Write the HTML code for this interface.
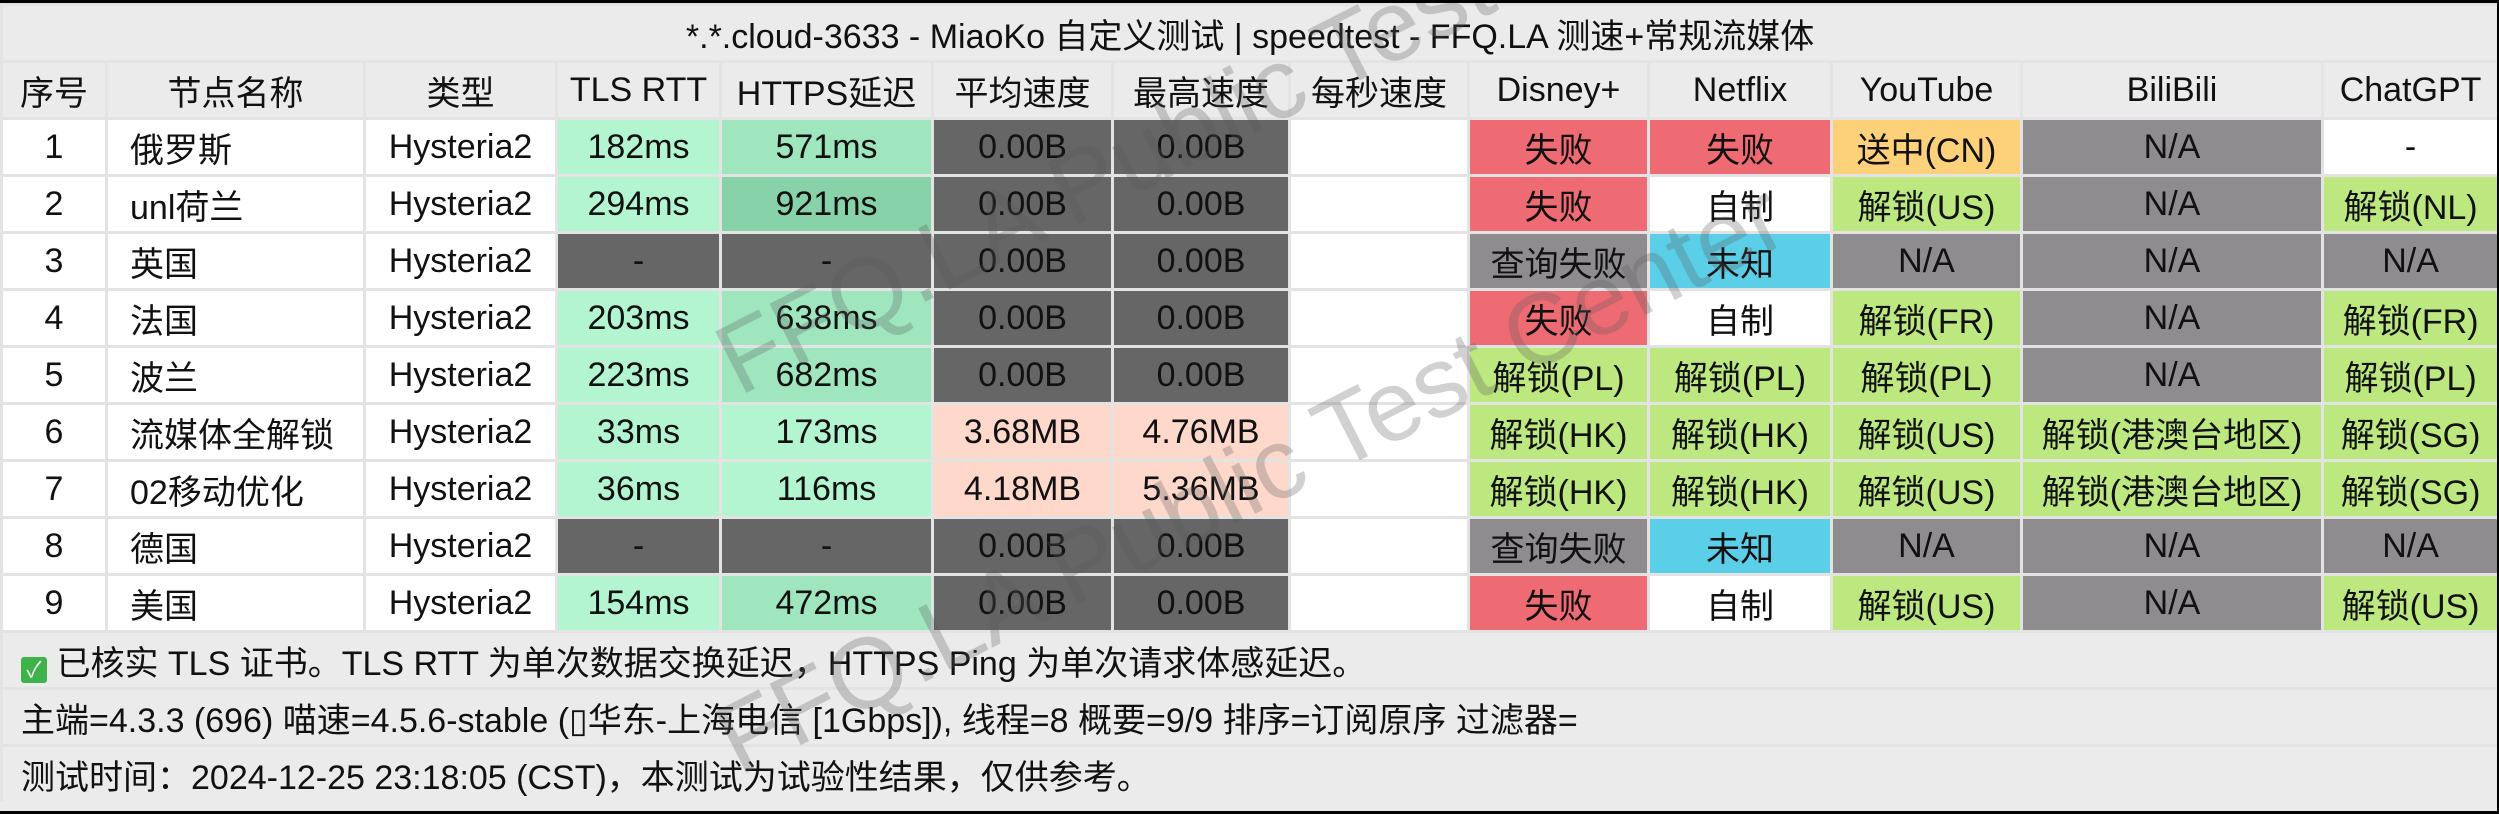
<!DOCTYPE html>
<html><head><meta charset="utf-8"><style>
html,body{margin:0;padding:0;background:#000;}
#w{position:absolute;left:0;top:3px;width:2497px;height:808px;background:#ebebeb;overflow:hidden;}
table{border-collapse:collapse;table-layout:fixed;width:2497px;font-family:"Liberation Sans","Noto Sans CJK SC",sans-serif;font-size:34px;color:#111;}
td{border:3px solid #e3e3e3;height:54px;padding:0;text-align:center;white-space:nowrap;overflow:hidden;background:#fff;}
tr.h td{background:#ebebeb;}
td.l{text-align:left;padding-left:22px;}
.t1{background:#b3f5d1}.t2{background:#9fe6bf}.t3{background:#88d2a9}
.d{background:#666}.p{background:#fdd8cb}
.f{background:#ef6b73}.y{background:#fdd07a}.n{background:#8e8c8f}.g{background:#bde77f}.c{background:#5bcfe8}
.foot td{background:#ebebeb;text-align:left;padding-left:18px;}
.wm{position:absolute;font-family:"Liberation Sans",sans-serif;font-size:100px;color:rgba(90,90,90,0.28);transform:rotate(-27deg);transform-origin:left bottom;white-space:nowrap;pointer-events:none;}
</style></head><body><div id="w">
<table>
<colgroup><col style="width:105px"><col style="width:258px"><col style="width:192px"><col style="width:164px"><col style="width:212px"><col style="width:180px"><col style="width:177px"><col style="width:179px"><col style="width:180px"><col style="width:183px"><col style="width:190px"><col style="width:301px"><col style="width:176px"></colgroup>
<tr class="h"><td colspan="13">*.*.cloud-3633 - MiaoKo 自定义测试 | speedtest - FFQ.LA 测速+常规流媒体</td></tr>
<tr class="h"><td>序号</td><td>节点名称</td><td>类型</td><td>TLS RTT</td><td>HTTPS延迟</td><td>平均速度</td><td>最高速度</td><td>每秒速度</td><td>Disney+</td><td>Netflix</td><td>YouTube</td><td>BiliBili</td><td>ChatGPT</td></tr>
<tr><td>1</td><td class="l">俄罗斯</td><td>Hysteria2</td><td class="t1">182ms</td><td class="t2">571ms</td><td class="d">0.00B</td><td class="d">0.00B</td><td></td><td class="f">失败</td><td class="f">失败</td><td class="y">送中(CN)</td><td class="n">N/A</td><td>-</td></tr>
<tr><td>2</td><td class="l">unl荷兰</td><td>Hysteria2</td><td class="t1">294ms</td><td class="t3">921ms</td><td class="d">0.00B</td><td class="d">0.00B</td><td></td><td class="f">失败</td><td>自制</td><td class="g">解锁(US)</td><td class="n">N/A</td><td class="g">解锁(NL)</td></tr>
<tr><td>3</td><td class="l">英国</td><td>Hysteria2</td><td class="d">-</td><td class="d">-</td><td class="d">0.00B</td><td class="d">0.00B</td><td></td><td class="n">查询失败</td><td class="c">未知</td><td class="n">N/A</td><td class="n">N/A</td><td class="n">N/A</td></tr>
<tr><td>4</td><td class="l">法国</td><td>Hysteria2</td><td class="t1">203ms</td><td class="t2">638ms</td><td class="d">0.00B</td><td class="d">0.00B</td><td></td><td class="f">失败</td><td>自制</td><td class="g">解锁(FR)</td><td class="n">N/A</td><td class="g">解锁(FR)</td></tr>
<tr><td>5</td><td class="l">波兰</td><td>Hysteria2</td><td class="t1">223ms</td><td class="t2">682ms</td><td class="d">0.00B</td><td class="d">0.00B</td><td></td><td class="g">解锁(PL)</td><td class="g">解锁(PL)</td><td class="g">解锁(PL)</td><td class="n">N/A</td><td class="g">解锁(PL)</td></tr>
<tr><td>6</td><td class="l">流媒体全解锁</td><td>Hysteria2</td><td class="t1">33ms</td><td class="t1">173ms</td><td class="p">3.68MB</td><td class="p">4.76MB</td><td></td><td class="g">解锁(HK)</td><td class="g">解锁(HK)</td><td class="g">解锁(US)</td><td class="g">解锁(港澳台地区)</td><td class="g">解锁(SG)</td></tr>
<tr><td>7</td><td class="l">02移动优化</td><td>Hysteria2</td><td class="t1">36ms</td><td class="t1">116ms</td><td class="p">4.18MB</td><td class="p">5.36MB</td><td></td><td class="g">解锁(HK)</td><td class="g">解锁(HK)</td><td class="g">解锁(US)</td><td class="g">解锁(港澳台地区)</td><td class="g">解锁(SG)</td></tr>
<tr><td>8</td><td class="l">德国</td><td>Hysteria2</td><td class="d">-</td><td class="d">-</td><td class="d">0.00B</td><td class="d">0.00B</td><td></td><td class="n">查询失败</td><td class="c">未知</td><td class="n">N/A</td><td class="n">N/A</td><td class="n">N/A</td></tr>
<tr><td>9</td><td class="l">美国</td><td>Hysteria2</td><td class="t1">154ms</td><td class="t2">472ms</td><td class="d">0.00B</td><td class="d">0.00B</td><td></td><td class="f">失败</td><td>自制</td><td class="g">解锁(US)</td><td class="n">N/A</td><td class="g">解锁(US)</td></tr>
<tr class="foot"><td colspan="13"><span style="display:inline-block;width:26px;height:26px;background:#3db34a;color:#fff;font-size:22px;line-height:26px;text-align:center;border-radius:3px;vertical-align:-2px">✓</span> 已核实 TLS 证书。TLS RTT 为单次数据交换延迟，HTTPS Ping 为单次请求体感延迟。</td></tr>
<tr class="foot"><td colspan="13">主端=4.3.3 (696) 喵速=4.5.6-stable (▯华东-上海电信 [1Gbps]), 线程=8 概要=9/9 排序=订阅原序 过滤器=</td></tr>
<tr class="foot"><td colspan="13" style="border-bottom:none">测试时间：2024-12-25 23:18:05 (CST)，本测试为试验性结果，仅供参考。</td></tr>
</table>
<div class="wm" style="left:750px;top:300px;">FFQ.LA Public Test Center</div>
<div class="wm" style="left:750px;top:680px;">FFQ.LA Public Test Center</div>
</div></body></html>
